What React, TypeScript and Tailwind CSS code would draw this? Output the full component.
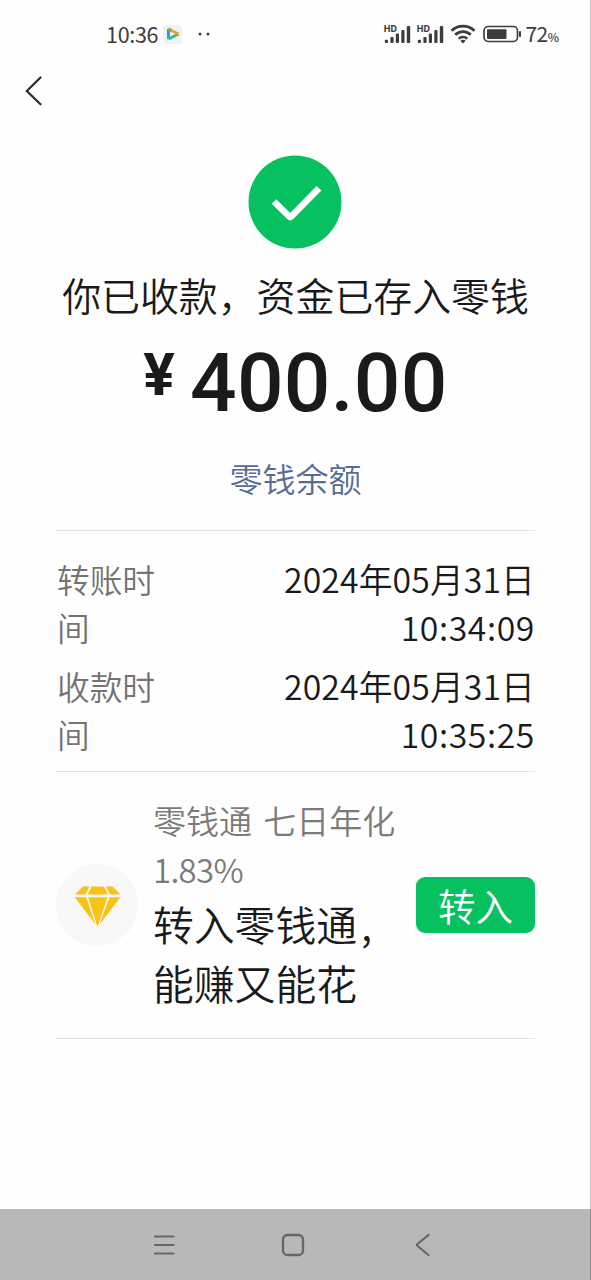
function Signal() {
  return (
    <div className="relative h-6 w-[28px]">
      <span className="absolute left-0 top-[2px] text-[9.5px] font-bold leading-[9px] tracking-[-0.4px]">HD</span>
      <svg className="absolute left-0 top-[3px]" width="28" height="19" viewBox="0 0 28 19" fill="#3c3c3c">
        <rect x="1.8" y="14.8" width="3.2" height="3.2" rx="1" />
        <rect x="7.4" y="12" width="3.2" height="6" rx="1" />
        <rect x="12.8" y="8.5" width="3.2" height="9.5" rx="1" />
        <rect x="18.3" y="5" width="3.2" height="13" rx="1" />
        <rect x="23.8" y="1" width="3.4" height="17" rx="1" />
      </svg>
    </div>
  );
}

function StatusBar() {
  return (
    <header className="flex h-[68px] items-center pl-[106px] pr-[31px] font-normal text-[#3c3c3c]">
      <span className="w-[53px] text-[21.5px] leading-6 tracking-[-0.3px]">10:36</span>
      <div className="ml-[4px] flex h-[19px] w-[19px] items-center justify-center rounded bg-[#f0f1f2]">
        <svg width="16" height="16" viewBox="0 0 16 16" fill="none" strokeWidth="3" strokeLinejoin="round">
          <path d="M3.5 3v10" stroke="#2c9cf0" />
          <path d="M3.5 13 13.500 8" stroke="#39b98b" />
          <path d="M3.5 3 13.500 8" stroke="#f59a2c" />
          <path d="M3.5 3 6 4.3" stroke="#5bb85b" />
        </svg>
      </div>
      <svg className="ml-[15px]" width="14" height="6" viewBox="0 0 14 6" fill="#3c3c3c">
        <circle cx="3" cy="3" r="1.5" />
        <circle cx="11" cy="3" r="1.5" />
      </svg>
      <div className="ml-auto flex items-center">
        <Signal />
        <div className="ml-[5px]">
          <Signal />
        </div>
        <svg className="ml-[6px]" width="26" height="20" viewBox="0 0 26 20" fill="none" stroke="#3c3c3c" strokeWidth="2.7">
          <path d="M1.5 6.7a16.5 16.5 0 0 1 23 0M5.2 10.8a11.2 11.2 0 0 1 15.6 0M8.8 14.7a6 6 0 0 1 8.4 0" />
          <path d="m13 19.5-2.7-2.7q2.7-2 5.4 0z" fill="#3c3c3c" stroke="none" />
        </svg>
        <svg className="ml-[7px]" width="39" height="18" viewBox="0 0 39 18" fill="none">
          <rect x="1" y="1.5" width="33.5" height="15" rx="4.2" stroke="#3c3c3c" strokeWidth="1.7" />
          <rect x="4" y="4.3" width="19.5" height="9.6" rx="1" fill="#3c3c3c" />
          <path d="M37 7v4" stroke="#3c3c3c" strokeWidth="2" strokeLinecap="round" />
        </svg>
        <div className="ml-[3px] flex items-baseline pt-px leading-6">
          <span className="text-[21px] tracking-[-0.5px]">72</span>
          <span className="text-[12px] font-medium">%</span>
        </div>
      </div>
    </header>
  );
}

function TimeRow({ label, date, time }: { label: string; date: string; time: string }) {
  return (
    <div className="flex h-[96px] justify-between leading-[48px]">
      <div className="w-[100px] pl-px text-[32.7px] text-[#737373]">{label}</div>
      <div className="text-right text-[33.8px] text-[#1a1a1a]">
        <div className="tracking-[0.1px]">{date}</div>
        <div className="tracking-[0.6px]">{time}</div>
      </div>
    </div>
  );
}

export default function App() {
  return (
    <div className="flex h-[1280px] w-[591px] flex-col border-r border-[#c4c4c4] bg-[#fefefe] font-['Noto_Sans_CJK_SC',sans-serif] font-[350] text-[#1a1a1a]">
      <StatusBar />
      <div className="flex h-[87px] pl-[24px] pt-[7px]">
        <svg width="20" height="32" viewBox="0 0 20 32" fill="none" stroke="#2b2b2b" strokeWidth="2.2" strokeLinecap="round">
          <path d="M16.5 2.5 2.8 16 16.5 29.3" />
        </svg>
      </div>

      <main className="flex flex-1 flex-col pl-[56px] pr-[55px]">
        <div className="flex flex-col items-center whitespace-nowrap">
          <svg className="mr-px" width="94" height="94" viewBox="0 0 94 94" fill="none">
            <circle cx="47" cy="47" r="46.5" fill="#07c160" />
            <path d="m26 46.500 15.200 15q1 1 2 0L71 33.200" stroke="#fff" strokeWidth="6.6" strokeLinejoin="round" />
          </svg>
          <h1 className="mt-[20px] text-[38.9px] font-[350] leading-[50px]">你已收款，资金已存入零钱</h1>
          <div className="mt-[22px] flex h-[84px] font-['Roboto',sans-serif]">
            <span className="mr-[15px] text-[59px] font-bold leading-[68px]">¥</span>
            <span className="text-[82px] font-medium leading-[84px] tracking-[0.3px]">400.00</span>
          </div>
          <a className="mt-[28px] text-[33px] leading-[50px] text-[#576b95]">零钱余额</a>
        </div>

        <section className="mt-[27px] flex h-[242px] flex-col gap-[11px] border-y border-[#e3e3e3] pt-[24px]">
          <TimeRow label="转账时间" date="2024年05月31日" time="10:34:09" />
          <TimeRow label="收款时间" date="2024年05月31日" time="10:35:25" />
        </section>

        <section className="flex h-[267px] items-center border-b border-[#e3e3e3]">
          <div className="flex h-[82px] w-[82px] items-center justify-center rounded-full bg-[#f8f8f8]">
            <svg className="mt-[3px]" width="47" height="42" viewBox="0 0 47 42" fill="#f9c214">
              <path d="M9 .5h6.500L11.500 8.500H1zM17.700.5h12L34 8.500H13.700zM32 .5h6.500L46.500 8.500H36.200zM.8 11.200h11.400L21.500 38.500zM14.200 11.200h19.200L23.500 41zM35.400 11.200h11L25.500 38.500z" />
            </svg>
          </div>
          <div className="mb-[2px] ml-[15px] flex-1 whitespace-nowrap">
            <div className="text-[33px] leading-[49px] text-[#7b7b7b]">
              <span className="[word-spacing:4px]">零钱通 七日年化</span>
              <br />
              <span className="tracking-[-0.7px]">1.83%</span>
            </div>
            <div className="text-[40.8px] leading-[59px]">
              转入零钱通<span className="ml-1">,</span>
              <br />
              能赚又能花
            </div>
          </div>
          <button className="h-[56px] w-[119px] rounded-[9px] bg-[#07c160] text-[37.5px] font-[350] leading-[54px] text-white">转入</button>
        </section>
      </main>

      <nav className="-mr-px flex h-[71px] items-center border-r border-[#8d8d8d] bg-[#b8b8b8] pl-[153px]">
        <svg width="22" height="22" viewBox="0 0 22 22" stroke="#666" strokeWidth="2.2" strokeLinecap="round">
          <path d="M2 2.5h18.5M2 11h18.5M2 19.5h18.5" />
        </svg>
        <svg className="ml-[106px]" width="24" height="24" viewBox="0 0 24 24" fill="none" stroke="#666" strokeWidth="2.3">
          <rect x="2" y="2" width="20" height="20" rx="4.5" />
        </svg>
        <svg className="ml-[110px]" width="16" height="24" viewBox="0 0 16 24" fill="none" stroke="#666" strokeWidth="2.2" strokeLinecap="round" strokeLinejoin="round">
          <path d="M13.5 2 2.5 11q-1 1 0 2l11 9" />
        </svg>
      </nav>
    </div>
  );
}
